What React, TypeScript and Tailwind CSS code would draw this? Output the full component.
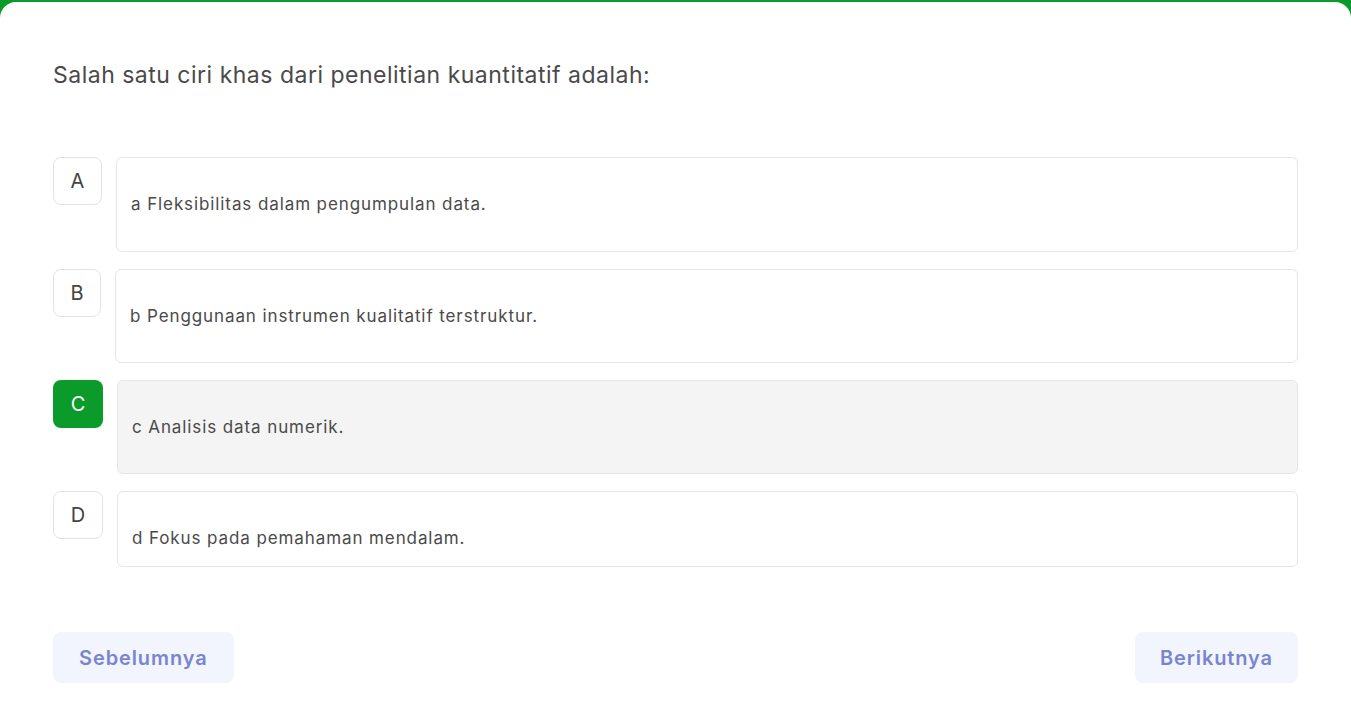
import React from 'react';

const options = [
  { key: 'A', text: 'a Fleksibilitas dalam pengumpulan data.', h: 'h-[95px]', w: 'w-[49px]' },
  { key: 'B', text: 'b Penggunaan instrumen kualitatif terstruktur.', h: 'h-[94px]', w: 'w-[48px]' },
  { key: 'C', text: 'c Analisis data numerik.', h: 'h-[94px]', w: 'w-[50px]', selected: true },
  { key: 'D', text: 'd Fokus pada pemahaman mendalam.', h: 'h-[76px]', w: 'w-[50px]' },
];

export default function App() {
  return (
    <div className="min-h-screen bg-[#0a9b2b] pt-[2px] font-['Inter',sans-serif]">
      <div className="min-h-[704px] bg-white rounded-t-[16px] px-[53px] pt-[57px]">
        <h1 className="text-[23px] leading-[32px] tracking-[0.5px] text-[#4a4a4a]">
          Salah satu ciri khas dari penelitian kuantitatif adalah:
        </h1>

        <div className="mt-[66px] flex flex-col gap-[17px]">
          {options.map((o) => (
            <div key={o.key} className="flex gap-[14px]">
              <div
                className={
                  o.selected
                    ? o.w + ' h-[48px] shrink-0 rounded-[8px] bg-[#0a9b2b] text-white text-[20px] flex items-center justify-center'
                    : o.w + ' h-[48px] shrink-0 rounded-[8px] border border-[#e3e3e3] bg-white text-[#444] text-[20px] flex items-center justify-center'
                }
              >
                {o.key}
              </div>
              <div
                className={
                  'flex-1 rounded-[6px] border border-[#e6e6e6] px-[14px] pt-[34px] text-[17px] leading-[24px] tracking-[0.9px] text-[#4a4a4a] ' +
                  o.h +
                  (o.selected ? ' bg-[#f4f4f4]' : ' bg-white')
                }
              >
                {o.text}
              </div>
            </div>
          ))}
        </div>

        <div className="mt-[65px] flex justify-between">
          <button className="h-[51px] px-[26px] rounded-[8px] bg-[#f2f5fe] text-[#7986cf] text-[20px] tracking-[0.9px] font-semibold">
            Sebelumnya
          </button>
          <button className="h-[51px] px-[25px] rounded-[8px] bg-[#f2f5fe] text-[#7986cf] text-[20px] tracking-[0.9px] font-semibold">
            Berikutnya
          </button>
        </div>
      </div>
    </div>
  );
}
